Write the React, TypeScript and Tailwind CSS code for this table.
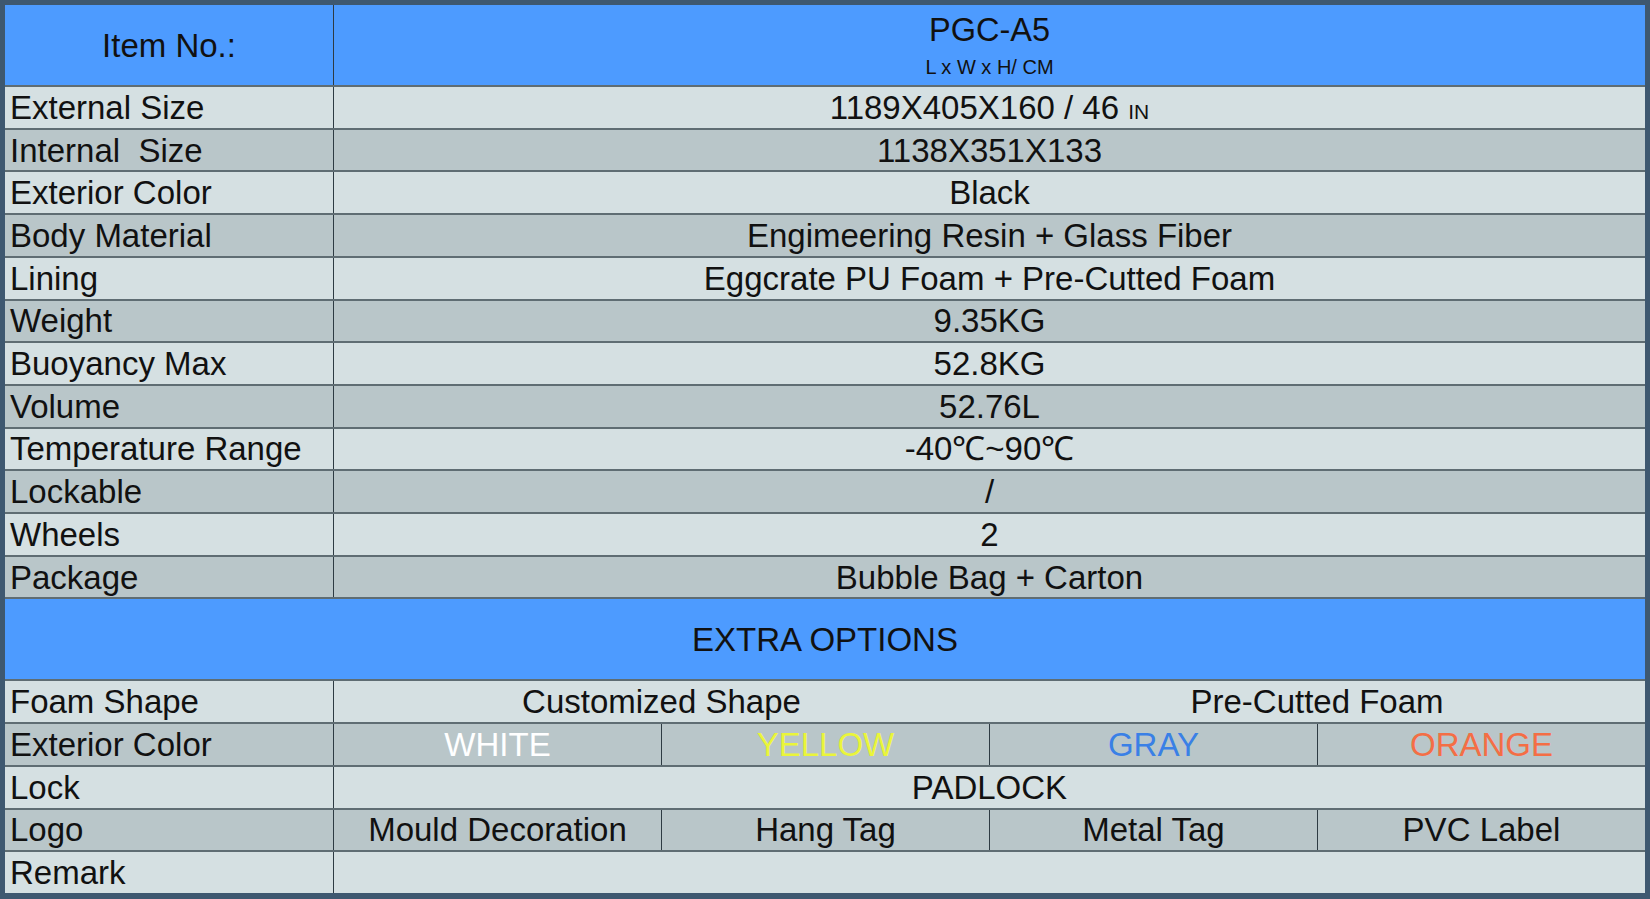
import React from "react";

const LIGHT = "bg-[#d5e0e2]";
const DARK = "bg-[#b9c6c9]";

type Row = { label: string; value: React.ReactNode };

const rows: Row[] = [
  {
    label: "External Size",
    value: (
      <span>
        1189X405X160 / 46 <span className="text-[21px]">IN</span>
      </span>
    ),
  },
  { label: "Internal  Size", value: "1138X351X133" },
  { label: "Exterior Color", value: "Black" },
  { label: "Body Material", value: "Engimeering Resin + Glass Fiber" },
  { label: "Lining", value: "Eggcrate PU Foam + Pre-Cutted Foam" },
  { label: "Weight", value: "9.35KG" },
  { label: "Buoyancy Max", value: "52.8KG" },
  { label: "Volume", value: "52.76L" },
  { label: "Temperature Range", value: "-40℃~90℃" },
  { label: "Lockable", value: "/" },
  { label: "Wheels", value: "2" },
  { label: "Package", value: "Bubble Bag + Carton" },
];

function Label({ text, bg }: { text: string; bg: string }) {
  return (
    <div className={`${bg} flex items-center pl-[5px] whitespace-pre`}>{text}</div>
  );
}

function Cell({
  children,
  bg,
  span,
  border = true,
  color,
}: {
  children?: React.ReactNode;
  bg: string;
  span: string;
  border?: boolean;
  color?: string;
}) {
  return (
    <div
      className={`${bg} ${span} ${border ? "border-l border-[#2e3b43]" : ""} ${
        color ?? ""
      } flex items-center justify-center whitespace-pre`}
    >
      {children}
    </div>
  );
}

export default function App() {
  return (
    <div
      className="w-[1650px] h-[899px] border-t-[5px] border-x-[5px] border-b-[6px] border-[#3e5870] bg-[#5f6d73] text-[33px] text-[#111111] overflow-hidden"
      style={{ fontFamily: '"Liberation Sans", Arial, sans-serif' }}
    >
      <div className="grid h-full grid-cols-5 gap-y-[2px] grid-rows-[80px_repeat(12,1fr)_80px_repeat(5,1fr)] leading-none">
        {/* Header */}
        <div className="bg-[#4d9bff] flex items-center justify-center">Item No.:</div>
        <div className="bg-[#4d9bff] col-span-4 border-l border-[#2e3b43] flex flex-col items-center pt-[7px]">
          <div className="leading-[36px] text-[32.5px]">PGC-A5</div>
          <div className="leading-[20px] text-[20px] mt-[9px]">L x W x H/ CM</div>
        </div>

        {rows.map((r, i) => {
          const bg = i % 2 === 0 ? LIGHT : DARK;
          return (
            <React.Fragment key={r.label}>
              <Label text={r.label} bg={bg} />
              <Cell bg={bg} span="col-span-4">
                {r.value}
              </Cell>
            </React.Fragment>
          );
        })}

        {/* Extra options */}
        <div className="bg-[#4d9bff] col-span-5 flex items-center justify-center">
          EXTRA OPTIONS
        </div>

        {/* Foam shape */}
        <Label text="Foam Shape" bg={LIGHT} />
        <Cell bg={LIGHT} span="col-span-2">
          Customized Shape
        </Cell>
        <Cell bg={LIGHT} span="col-span-2" border={false}>
          Pre-Cutted Foam
        </Cell>

        {/* Exterior color */}
        <Label text="Exterior Color" bg={DARK} />
        <Cell bg={DARK} span="col-span-1" color="text-white">
          WHITE
        </Cell>
        <Cell bg={DARK} span="col-span-1" color="text-[#eaf53a]">
          YELLOW
        </Cell>
        <Cell bg={DARK} span="col-span-1" color="text-[#3a80e6]">
          GRAY
        </Cell>
        <Cell bg={DARK} span="col-span-1" color="text-[#f46e45]">
          ORANGE
        </Cell>

        {/* Lock */}
        <Label text="Lock" bg={LIGHT} />
        <Cell bg={LIGHT} span="col-span-4">
          PADLOCK
        </Cell>

        {/* Logo */}
        <Label text="Logo" bg={DARK} />
        <Cell bg={DARK} span="col-span-1">
          Mould Decoration
        </Cell>
        <Cell bg={DARK} span="col-span-1">
          Hang Tag
        </Cell>
        <Cell bg={DARK} span="col-span-1">
          Metal Tag
        </Cell>
        <Cell bg={DARK} span="col-span-1">
          PVC Label
        </Cell>

        {/* Remark */}
        <Label text="Remark" bg={LIGHT} />
        <Cell bg={LIGHT} span="col-span-4" />
      </div>
    </div>
  );
}
